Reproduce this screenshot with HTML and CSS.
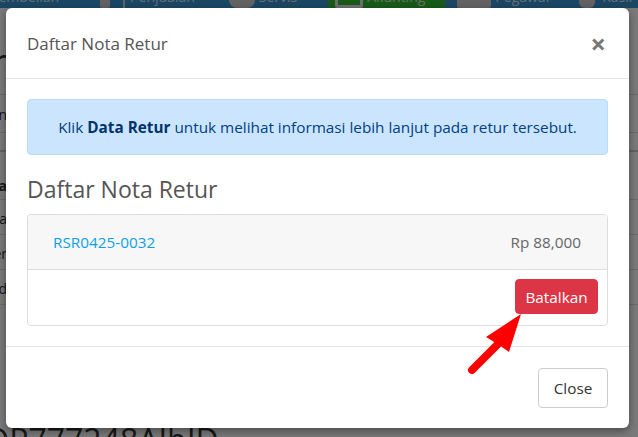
FILE: index.html
```html
<!DOCTYPE html>
<html lang="id">
<head>
	<meta charset="UTF-8">
	<title>Daftar Nota Retur</title>
	<link rel="stylesheet" href="styles.css">
</head>
<body>
	<div class="page">
		<div class="topnav">
			<span class="nav-item first">Pembelian <i class="caret">&#9662;</i></span>
			<span class="nav-icon box"></span>
			<span class="nav-sep"></span>
			<span class="nav-item">Penjualan <i class="caret">&#9662;</i></span>
			<span class="nav-icon gears"></span>
			<span class="nav-item">Servis <i class="caret">&#9662;</i></span>
			<span class="nav-item active"><span class="nav-icon check"></span>Akunting <i class="caret">&#9662;</i></span>
			<span class="nav-icon truck"></span>
			<span class="nav-item">Pegawai <i class="caret">&#9662;</i></span>
			<span class="nav-icon small"></span>
			<span class="nav-item">Kasir</span>
		</div>

		<div class="content">
			<div class="page-head"><span>Faktur</span></div>
			<div class="row"><span>Catatan</span></div>
			<div class="row thin"><span></span></div>
			<div class="row head"><span>Data</span></div>
			<div class="row"><span>Nama</span></div>
			<div class="row"><span>Supplier</span></div>
			<div class="row"><span>Tgl Bayard</span></div>
			<div class="row last"><span></span></div>
			<div class="big-code"><span>DP777248AJbID</span></div>
		</div>
	</div>

	<div class="backdrop"></div>

	<div class="modal">
		<div class="modal-header">
			<h4 class="modal-title">Daftar Nota Retur</h4>
			<span class="close">&times;</span>
		</div>
		<div class="modal-body">
			<div class="alert">Klik&nbsp;<b>Data Retur</b>&nbsp;untuk melihat informasi lebih lanjut pada retur tersebut.</div>
			<h3 class="section-title">Daftar Nota Retur</h3>
			<div class="card">
				<div class="card-head">
					<a href="#" class="nota-link">RSR0425-0032</a>
					<span class="nota-total">Rp 88,000</span>
				</div>
				<div class="card-body">
					<button class="btn btn-danger">Batalkan</button>
				</div>
			</div>
		</div>
		<div class="modal-footer">
			<button class="btn btn-default">Close</button>
		</div>
	</div>

	<!-- panah penanda tombol batalkan -->
	<svg class="arrow" width="70" height="75" viewBox="0 0 70 75">
		<line x1="37" y1="40" x2="12" y2="65" stroke="#ff0000" stroke-width="8" stroke-linecap="round"/>
		<polygon points="61,9 49,47 39,40 26,32" fill="#ff0000"/>
	</svg>
</body>
</html>
```

FILE: styles.css
```css
* {
	margin: 0;
	padding: 0;
	box-sizing: border-box;
}

body {
	width: 638px;
	height: 437px;
	overflow: hidden;
	font-family: "Open Sans", "Noto Sans", sans-serif;
	font-size: 15.3px;
	color: #333;
	background: #fff;
}

/* halaman di belakang modal */
.page {
	height: 437px;
	overflow: hidden;
}

.topnav {
	height: 8px;
	overflow: hidden;
	background: #3a94d4;
	display: flex;
	align-items: flex-end;
	color: rgba(255, 255, 255, 0.8);
	font-size: 14px;
	line-height: 20px;
	white-space: nowrap;
}

.nav-item {
	display: flex;
	align-items: center;
	height: 22px;
	padding-right: 19px;
	flex: none;
}

.nav-item.first {
	margin-left: -10px;
	padding-right: 30px;
}

.caret {
	font-style: normal;
	font-size: 9px;
	margin-left: 6px;
}

.nav-item.active {
	background: #34bc34;
	padding: 0 9px 0 7px;
	margin: 0 12px 0 1px;
}

.nav-icon {
	flex: none;
	height: 22px;
	background: #d0d0d0;
	border-radius: 2px;
}

.nav-icon.box {
	width: 10px;
	margin-right: 13px;
}

.nav-sep {
	flex: none;
	width: 2px;
	height: 22px;
	background: #d0d0d0;
	margin-right: 5px;
}

.nav-icon.gears {
	width: 26px;
	margin: 0 4px 0 4px;
	border-radius: 8px;
}

.nav-icon.check {
	width: 28px;
	height: 22px;
	background: none;
	border: 3px solid #e6e6e6;
	margin-right: 4px;
}

.nav-icon.truck {
	width: 34px;
	margin-right: 4px;
}

.nav-icon.small {
	width: 16px;
	margin-right: 7px;
	border-radius: 6px;
}

.content {
	display: flex;
	flex-direction: column;
	font-size: 14px;
}

.page-head,
.big-code {
	display: flex;
	justify-content: flex-end;
	width: 7px;
	white-space: nowrap;
}

.page-head {
	height: 86px;
	align-items: flex-start;
	padding-top: 34px;
	font-size: 36px;
	line-height: 40px;
	color: #333;
}

.row {
	display: flex;
	width: 638px;
	height: 38px;
	border-top: 1px solid #ddd;
	align-items: center;
	padding-top: 2px;
	white-space: nowrap;
}

.row span {
	display: flex;
	justify-content: flex-end;
	width: 7px;
}

.row.thin {
	height: 18px;
}

.row.head {
	height: 49px;
	border-top: 2px solid #ccc;
	font-weight: bold;
	padding-top: 20px;
}

.row.head ~ .row {
	height: 35px;
}

.row.head ~ .row.last {
	height: 118px;
}

.big-code {
	width: 260px;
	justify-content: flex-start;
	margin-left: -14px;
	font-size: 32px;
	line-height: 36px;
	color: #333;
}

/* lapisan gelap */
.backdrop {
	position: absolute;
	left: 0;
	top: 0;
	width: 638px;
	height: 437px;
	background: rgba(0, 0, 0, 0.52);
}

/* modal */
.modal {
	position: absolute;
	left: 6px;
	top: 8px;
	width: 623px;
	background: #fff;
	border-radius: 6px;
	box-shadow: 0 3px 9px rgba(0, 0, 0, 0.4);
}

.modal-header {
	display: flex;
	align-items: center;
	justify-content: space-between;
	height: 71px;
	padding: 0 23px 0 21px;
	border-bottom: 1px solid #e5e5e5;
}

.modal-title {
	font-size: 17px;
	line-height: 29px;
	font-weight: 500;
	color: #555;
}

.close {
	font-size: 27px;
	line-height: 29px;
	font-weight: 700;
	color: #777;
}

.modal-body {
	padding: 20px 21px 20px 21px;
}

.alert {
	display: flex;
	justify-content: center;
	align-items: center;
	height: 56px;
	padding: 0 15px;
	text-align: center;
	color: #004085;
	background: #cce5ff;
	border: 1px solid #b8daff;
	border-radius: 4px;
}

.alert b {
	color: #00336b;
}

.section-title {
	margin: 21px 0 12px;
	font-size: 23px;
	line-height: 26px;
	font-weight: 500;
	color: #555;
}

.card {
	border: 1px solid #ddd;
	border-radius: 4px;
}

.card-head {
	display: flex;
	justify-content: space-between;
	align-items: center;
	height: 55px;
	padding: 0 26px 0 25px;
	background: #f7f7f7;
	border-bottom: 1px solid #ddd;
	border-radius: 4px 4px 0 0;
}

.nota-link {
	color: #0ea0e6;
	text-decoration: none;
}

.nota-total {
	color: #666;
}

.card-body {
	display: flex;
	justify-content: flex-end;
	height: 55px;
	padding: 9px 9px 0;
}

.btn {
	font-family: inherit;
	font-size: 15.3px;
	border-radius: 4px;
	cursor: pointer;
}

.btn-danger {
	height: 35px;
	width: 83px;
	color: #fff;
	background: #dc3545;
	border: 1px solid #dc3545;
}

.modal-footer {
	display: flex;
	justify-content: flex-end;
	padding: 21px 21px 20px;
	border-top: 1px solid #e5e5e5;
}

.btn-default {
	width: 70px;
	height: 40px;
	color: #333;
	background: #fff;
	border: 1px solid #ccc;
}

.arrow {
	position: absolute;
	left: 460px;
	top: 305px;
}
```
